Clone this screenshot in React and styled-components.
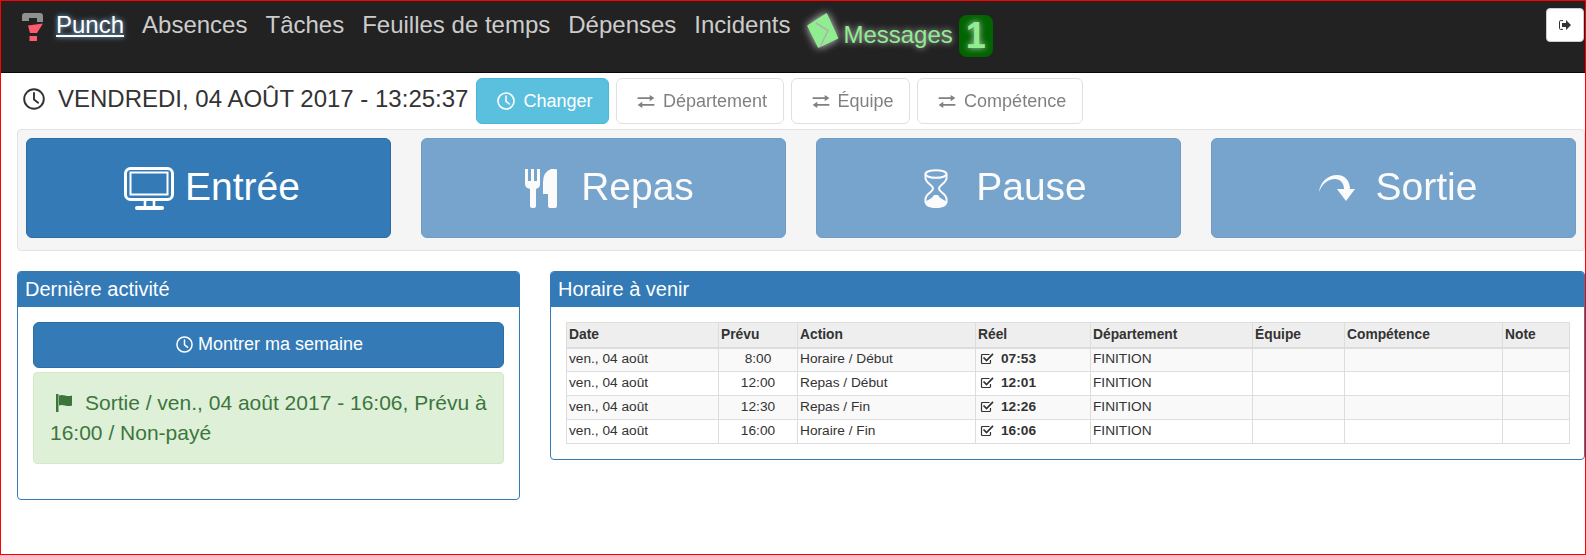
import React from 'react';
import styled, { createGlobalStyle } from 'styled-components';

const Global = createGlobalStyle`
  * { box-sizing: border-box; }
  html, body { margin: 0; padding: 0; background: #fff; }
  body { font-family: "Liberation Sans", Arial, sans-serif; color: #333; }
`;

const Frame = styled.div`
  width: 1586px;
  height: 555px;
  border: 1px solid #f00;
  overflow: hidden;
  background: #fff;
`;

const Nav = styled.nav`
  display: flex;
  align-items: flex-start;
  height: 72px;
  padding: 11px 0 0 20px;
  background: #222;
  border-bottom: 1px solid #080808;
`;

const Logo = styled.svg`
  width: 24px;
  height: 30px;
  margin-right: 11px;
  filter: blur(0.5px);
`;

const NavList = styled.div`
  display: flex;
  gap: 18px;
`;

const NavItem = styled.a`
  font-size: 24px;
  line-height: 26px;
  color: ${p => (p.$active ? '#fff' : '#ccc')};
  text-decoration: ${p => (p.$active ? 'underline' : 'none')};
  text-shadow: ${p => (p.$active ? '0 0 5px #8fc8ff' : 'none')};
`;

const MessagesLink = styled.a`
  display: flex;
  align-items: flex-start;
  margin-left: 17px;
  margin-top: 1px;
  color: #90ee90;
  font-size: 24px;
  line-height: 26px;
  text-shadow: 0 0 6px #ccc;
`;

const CardIcon = styled.svg`
  width: 32px;
  height: 36px;
  filter: drop-shadow(0 0 4px #ddd);
`;

const MessagesText = styled.span`
  margin: 9px 0 0 4px;
`;

const Badge = styled.span`
  width: 34px;
  height: 42px;
  margin: 2px 0 0 6px;
  border-radius: 8px;
  background: #006400;
  color: #90ee90;
  font-size: 36px;
  font-weight: 700;
  line-height: 42px;
  text-align: center;
  text-shadow: 0 0 6px #ccc;
`;

const LogoutButton = styled.button`
  display: flex;
  align-items: center;
  justify-content: center;
  width: 38px;
  height: 34px;
  margin: -4px 1px 0 auto;
  padding: 0;
  background: #fff;
  border: 1px solid #ccc;
  border-radius: 4px;
  color: #333;
`;

const Toolbar = styled.div`
  display: flex;
  align-items: center;
  padding: 5px 0 0 22px;
`;

const DateLabel = styled.div`
  display: flex;
  align-items: center;
  gap: 13px;
  margin-right: 8px;
  padding-bottom: 4px;
  font-size: 24px;
  white-space: nowrap;
`;

const ToolButtons = styled.div`
  display: flex;
  gap: 7px;
`;

const ToolButton = styled.button`
  display: flex;
  align-items: center;
  gap: 8px;
  height: 46px;
  padding: 0 15.5px 0 20px;
  border: 1px solid ${p => (p.$info ? '#46b8da' : '#ccc')};
  border-radius: 6px;
  background: ${p => (p.$info ? '#5bc0de' : '#fff')};
  color: ${p => (p.$info ? '#fff' : '#333')};
  font: 18px "Liberation Sans", Arial, sans-serif;
  opacity: ${p => (p.$info ? 1 : 0.62)};
  white-space: nowrap;
`;

const Well = styled.section`
  display: grid;
  grid-template-columns: repeat(4, 365px);
  gap: 30px;
  margin: 5px 0 0 16px;
  padding: 8px 8px 12px;
  background: #f5f5f5;
  border: 1px solid #e3e3e3;
  border-radius: 4px;
`;

const BigButton = styled.button`
  display: flex;
  align-items: center;
  justify-content: center;
  gap: ${p => p.$gap}px;
  height: 100px;
  padding: 0 0 0 ${p => p.$shift}px;
  border: 1px solid #2e6da4;
  border-radius: 6px;
  background: #337ab7;
  color: #fff;
  font: 39px "Liberation Sans", Arial, sans-serif;
  opacity: ${p => (p.$dim ? 0.65 : 1)};
`;

const BigLabel = styled.span`
  padding-bottom: 2px;
  line-height: 44px;
`;

const Columns = styled.div`
  display: grid;
  grid-template-columns: 503px 1035px;
  gap: 30px;
  align-items: start;
  margin: 20px 0 0 16px;
`;

const Panel = styled.section`
  border: 1px solid #337ab7;
  border-radius: 4px;
  overflow: hidden;
`;

const PanelHeading = styled.h3`
  margin: 0;
  height: 35px;
  padding: 0 7px;
  background: #337ab7;
  color: #fff;
  font-size: 20px;
  font-weight: 400;
  line-height: 35px;
`;

const PanelBody = styled.div`
  display: flex;
  flex-direction: column;
  gap: 4px;
  padding: 15px 15px ${p => p.$bottom}px;
`;

const WeekButton = styled.button`
  display: flex;
  align-items: center;
  justify-content: center;
  gap: 5px;
  width: 100%;
  height: 46px;
  padding: 0 0 2px 2px;
  border: 1px solid #2e6da4;
  border-radius: 6px;
  background: #337ab7;
  color: #fff;
  font: 18px "Liberation Sans", Arial, sans-serif;
`;

const Alert = styled.div`
  height: 92px;
  padding: 15px 14px 15px 16px;
  background: #dff0d8;
  border: 1px solid #d6e9c6;
  border-radius: 4px;
  color: #3c763d;
  font-size: 21px;
  line-height: 30px;
`;

const FlagIcon = styled.svg`
  width: 16px;
  height: 18px;
  margin: 0 13px 0 6px;
  vertical-align: -2px;
`;

const Table = styled.table`
  width: 1003px;
  table-layout: fixed;
  border-collapse: collapse;
  font-size: 13.7px;
`;

const HeadCell = styled.th`
  height: 25px;
  padding: 0 2px;
  background: #eee;
  border: 1px solid #ddd;
  border-bottom-width: 2px;
  text-align: left;
  font-size: 13.8px;
  font-weight: 700;
`;

const Row = styled.tr`
  background: ${p => (p.$striped ? '#f9f9f9' : '#fff')};
`;

const Cell = styled.td`
  height: 24px;
  padding: 0 2px 2px;
  border: 1px solid #ddd;
  text-align: ${p => (p.$center ? 'center' : 'left')};
  white-space: nowrap;
`;

const Actual = styled.strong`
  display: flex;
  align-items: center;
  gap: 7px;
  padding-left: 2px;
`;

const Clock = ({ size, color = 'currentColor' }) => (
  <svg width={size} height={size} viewBox="0 0 24 24" fill="none" stroke={color} strokeWidth="2.1">
    <circle cx="12" cy="12" r="10.700" />
    <path d="M12 5.500V12.500L16.500 16" strokeLinecap="round" />
  </svg>
);

const Transfer = () => (
  <svg width="18" height="13" viewBox="0 0 18 14" fill="currentColor">
    <path d="M0 2.300h13V0l5 3.300-5 3.400V4.400H0z" />
    <path d="M18 9.600H5V7.300L0 10.700 5 14v-2.300h13z" />
  </svg>
);

const Monitor = () => (
  <svg width="50" height="43" viewBox="0 0 50 43" fill="none" stroke="#fff">
    <rect x="1.500" y="1.500" width="47" height="31" rx="5" strokeWidth="3" />
    <rect x="6.500" y="5.500" width="37" height="22" strokeWidth="2" />
    <path d="M21 34v5M30 34v5" strokeWidth="2.600" />
    <rect x="11" y="39" width="29" height="4" rx="2" fill="#fff" stroke="none" />
  </svg>
);

const Cutlery = () => (
  <svg width="32" height="39" viewBox="0 0 32 39" fill="#fff">
    <path d="M0 0h3v12h3V0h3v12h3V0h3v15q0 4-4 5v17q0 2-2 2H7q-2 0-2-2V20q-5-1-5-5z" />
    <path d="M32 1V37q0 2-2 2h-5q-2 0-2-2V25h-5V13Q18 3 26 0h4q2 0 2 1z" />
  </svg>
);

const Hourglass = () => (
  <svg width="24" height="39" viewBox="0 0 24 39" fill="none" stroke="#fff" strokeWidth="2">
    <ellipse cx="12" cy="5" rx="10.500" ry="3.800" />
    <path d="M1.500 5v4c0 5 7.500 7 7.500 10.500S1.500 25 1.500 30v4M22.500 5v4c0 5-7.500 7-7.500 10.500s7.500 5.500 7.500 10.500v4" />
    <path d="M1 33c2-2 7-3 9-7h4c2 4 7 5 9 7v1c0 3-5 5-11 5S1 37 1 34z" fill="#fff" stroke="none" />
  </svg>
);

const ShareArrow = () => (
  <svg width="36" height="26" viewBox="0 0 36 26" fill="#fff">
    <path d="M0 17C1 7 9 0 18 0c8 0 13 6 13 14h5L27 26 18 14h7c0-6-4-10-9-10C9 4 3 9 0 17z" />
  </svg>
);

const CheckIcon = () => (
  <svg width="14" height="13" viewBox="0 0 14 13" fill="none" stroke="#333" style={{ flex: 'none' }}>
    <path d="M10.500 8v2.500a1 1 0 0 1-1 1h-7a1 1 0 0 1-1-1v-7a1 1 0 0 1 1-1h7" strokeWidth="1.200" />
    <path d="M3.500 5.500l3 3L13 1.800" strokeWidth="1.700" />
  </svg>
);

const bigButtons = [
  { label: 'Entrée', Icon: Monitor, gap: 11, shift: 7 },
  { label: 'Repas', Icon: Cutlery, gap: 24, shift: 12, dim: true },
  { label: 'Pause', Icon: Hourglass, gap: 28, shift: 14, dim: true },
  { label: 'Sortie', Icon: ShareArrow, gap: 21, shift: 9, dim: true },
];

const columns = [
  ['Date', 152], ['Prévu', 79], ['Action', 178], ['Réel', 115],
  ['Département', 162], ['Équipe', 92], ['Compétence', 158], ['Note', 67],
];

const rows = [
  ['8:00', 'Horaire / Début', '07:53'],
  ['12:00', 'Repas / Début', '12:01'],
  ['12:30', 'Repas / Fin', '12:26'],
  ['16:00', 'Horaire / Fin', '16:06'],
];

export default function App() {
  return (
    <>
      <Global />
      <Frame>
        <Nav>
          <Logo viewBox="0 0 24 30">
            <path d="M1 9V4q0-3 3-3h15q3 0 3 3v6H16V6H8v3z" fill="#909090" />
            <path d="M7 13.500L22 11.500L16 21H9z" fill="#ff5b6e" />
            <rect x="8.500" y="24" width="7.500" height="5" fill="#ff5b6e" />
          </Logo>
          <NavList>
            <NavItem $active>Punch</NavItem>
            <NavItem>Absences</NavItem>
            <NavItem>Tâches</NavItem>
            <NavItem>Feuilles de temps</NavItem>
            <NavItem>Dépenses</NavItem>
            <NavItem>Incidents</NavItem>
          </NavList>
          <MessagesLink>
            <CardIcon viewBox="0 0 32 36">
              <path d="M19.500 1L1 13l10.500 21L30.500 25z" fill="#90ee90" stroke="#90ee90" strokeWidth="1.500" strokeLinejoin="round" />
              <path d="M9 10l12 7.500L13 34" fill="none" stroke="#b0b0b0" strokeWidth="1.500" />
            </CardIcon>
            <MessagesText>Messages</MessagesText>
            <Badge>1</Badge>
          </MessagesLink>
          <LogoutButton aria-label="Déconnexion">
            <svg width="12" height="10" viewBox="0 0 12 10" fill="#333">
              <path d="M4 .6H1.500a1 1 0 0 0-1 1v6.800a1 1 0 0 0 1 1H4" fill="none" stroke="#333" strokeWidth="1" />
              <path d="M3 3h4V0l5 5-5 5V7H3z" />
            </svg>
          </LogoutButton>
        </Nav>

        <Toolbar>
          <DateLabel>
            <Clock size={22} />
            VENDREDI, 04 AOÛT 2017 - 13:25:37
          </DateLabel>
          <ToolButtons>
            <ToolButton $info><Clock size={18} />Changer</ToolButton>
            <ToolButton><Transfer />Département</ToolButton>
            <ToolButton><Transfer />Équipe</ToolButton>
            <ToolButton><Transfer />Compétence</ToolButton>
          </ToolButtons>
        </Toolbar>

        <Well>
          {bigButtons.map(({ label, Icon, gap, shift, dim }) => (
            <BigButton key={label} $gap={gap} $shift={shift} $dim={dim}>
              <Icon />
              <BigLabel>{label}</BigLabel>
            </BigButton>
          ))}
        </Well>

        <Columns>
          <Panel>
            <PanelHeading>Dernière activité</PanelHeading>
            <PanelBody $bottom={35}>
              <WeekButton><Clock size={17} />Montrer ma semaine</WeekButton>
              <Alert>
                <FlagIcon viewBox="0 0 16 18" fill="#3c763d">
                  <rect width="2.500" height="18" />
                  <path d="M3 1.500c4-2 8 2 13 0v10c-5 2-9-2-13 0z" />
                </FlagIcon>
                Sortie / ven., 04 août 2017 - 16:06, Prévu à 16:00 / Non-payé
              </Alert>
            </PanelBody>
          </Panel>

          <Panel>
            <PanelHeading>Horaire à venir</PanelHeading>
            <PanelBody $bottom={15}>
              <Table>
                <colgroup>
                  {columns.map(([name, width]) => <col key={name} width={width} />)}
                </colgroup>
                <thead>
                  <tr>{columns.map(([name]) => <HeadCell key={name}>{name}</HeadCell>)}</tr>
                </thead>
                <tbody>
                  {rows.map(([planned, action, actual], i) => (
                    <Row key={actual} $striped={i % 2 === 0}>
                      <Cell>ven., 04 août</Cell>
                      <Cell $center>{planned}</Cell>
                      <Cell>{action}</Cell>
                      <Cell><Actual><CheckIcon />{actual}</Actual></Cell>
                      <Cell>FINITION</Cell>
                      <Cell />
                      <Cell />
                      <Cell />
                    </Row>
                  ))}
                </tbody>
              </Table>
            </PanelBody>
          </Panel>
        </Columns>
      </Frame>
    </>
  );
}
